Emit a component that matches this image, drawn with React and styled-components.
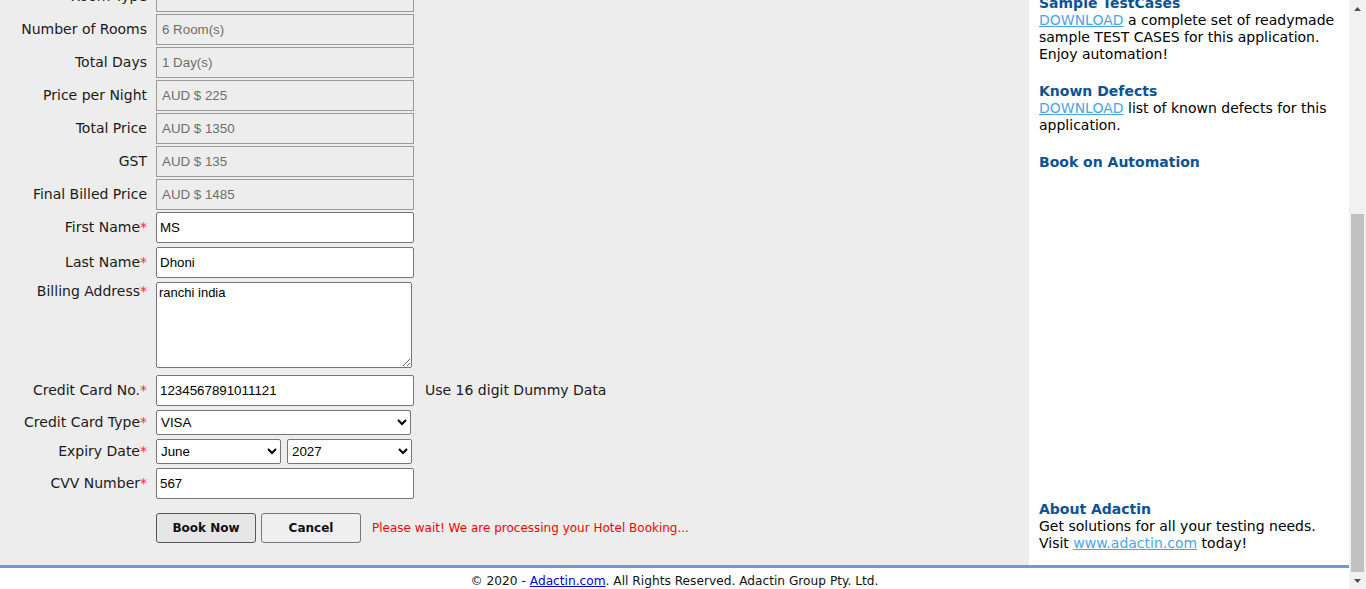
import React, { useLayoutEffect, useEffect, useState } from 'react'
import styled, { createGlobalStyle } from 'styled-components'

const GlobalStyle = createGlobalStyle`
  html, body {
    margin: 0;
    padding: 0;
    background: #ffffff;
    font-family: "DejaVu Sans", Verdana, sans-serif;
    color: #000;
  }
  * { box-sizing: border-box; }
`

const readonlyRows = [
  ['Hotel Name', 'Hotel Creek'],
  ['Location', 'Sydney'],
  ['Room Type', ''],
  ['Number of Rooms', '6 Room(s)'],
  ['Total Days', '1 Day(s)'],
  ['Price per Night', 'AUD $ 225'],
  ['Total Price', 'AUD $ 1350'],
  ['GST', 'AUD $ 135'],
  ['Final Billed Price', 'AUD $ 1485'],
]

const months = ['January', 'February', 'March', 'April', 'May', 'June', 'July', 'August', 'September', 'October', 'November', 'December']

function FakeScrollbar() {
  const [thumb, setThumb] = useState({ top: 17, height: 0 })

  useEffect(() => {
    const update = () => {
      const docH = document.documentElement.scrollHeight
      const vh = window.innerHeight
      const track = vh - 34
      setThumb({
        top: 17 + (window.scrollY / docH) * track,
        height: (vh / docH) * track,
      })
    }
    update()
    const t = setTimeout(update, 0)
    window.addEventListener('scroll', update)
    return () => {
      clearTimeout(t)
      window.removeEventListener('scroll', update)
    }
  }, [])

  return (
    <ScrollTrack>
      <Arrow>
        <svg width="7" height="4" viewBox="0 0 7 4"><path d="M3.5 0 L7 4 L0 4 Z" fill="#505050" /></svg>
      </Arrow>
      <Thumb style={{ top: thumb.top, height: thumb.height }} />
      <Arrow $bottom>
        <svg width="7" height="4" viewBox="0 0 7 4"><path d="M0 0 L7 0 L3.5 4 Z" fill="#505050" /></svg>
      </Arrow>
    </ScrollTrack>
  )
}

function App() {
  useLayoutEffect(() => {
    window.scrollTo(0, document.documentElement.scrollHeight)
  }, [])
  useEffect(() => {
    const t = setTimeout(() => window.scrollTo(0, document.documentElement.scrollHeight), 0)
    return () => clearTimeout(t)
  }, [])

  return (
    <>
      <GlobalStyle />
      <Page>
        <Header>
          <Logo>adactin</Logo>
          <HeaderText>Welcome to Adactin Group of Hotels</HeaderText>
        </Header>
        <Body>
          <Main>
            <Title>Book A Hotel</Title>
            <Form>
              {readonlyRows.map(([label, value]) => (
                <Row key={label} $gap={2}>
                  <Label>{label}</Label>
                  <TextInput disabled defaultValue={value} />
                </Row>
              ))}
              <Row $gap={2}>
                <Label>First Name<Req>*</Req></Label>
                <TextInput defaultValue="MS" />
              </Row>
              <Row $gap={4}>
                <Label>Last Name<Req>*</Req></Label>
                <TextInput defaultValue="Dhoni" />
              </Row>
              <Row $gap={4} $top>
                <Label $top>Billing Address<Req>*</Req></Label>
                <TextArea defaultValue="ranchi india" />
              </Row>
              <Row $gap={7}>
                <Label>Credit Card No.<Req>*</Req></Label>
                <TextInput defaultValue="1234567891011121" />
                <Hint>Use 16 digit Dummy Data</Hint>
              </Row>
              <Row $gap={4}>
                <Label>Credit Card Type<Req>*</Req></Label>
                <Select $w={255} defaultValue="VISA">
                  <option>VISA</option>
                  <option>Master Card</option>
                  <option>American Express</option>
                </Select>
              </Row>
              <Row $gap={4}>
                <Label>Expiry Date<Req>*</Req></Label>
                <Pair>
                  <Select $w={125} defaultValue="June">
                    {months.map(m => <option key={m}>{m}</option>)}
                  </Select>
                  <Select $w={125} defaultValue="2027">
                    <option>2026</option>
                    <option>2027</option>
                    <option>2028</option>
                  </Select>
                </Pair>
              </Row>
              <Row $gap={4}>
                <Label>CVV Number<Req>*</Req></Label>
                <TextInput defaultValue="567" />
              </Row>
              <Row $gap={14}>
                <Label />
                <Buttons>
                  <Button $primary>Book Now</Button>
                  <Button>Cancel</Button>
                  <Wait>Please wait! We are processing your Hotel Booking...</Wait>
                </Buttons>
              </Row>
            </Form>
          </Main>
          <Sidebar>
            <Section>
              <SideHead>Build Your Own Framework</SideHead>
              <p>Automation framework guide.</p>
            </Section>
            <Section>
              <SideHead>Testing Courses</SideHead>
              <p>Selenium and QTP courses.</p>
            </Section>
            <Section>
              <SideHead>Practice Applications</SideHead>
              <p>More demo apps for testing.</p>
            </Section>
            <Section>
              <SideHead>Sample TestCases</SideHead>
              <p><SideLink href="#">DOWNLOAD</SideLink> a complete set of readymade sample TEST CASES for this application. Enjoy automation!</p>
            </Section>
            <Section>
              <SideHead>Known Defects</SideHead>
              <p><SideLink href="#">DOWNLOAD</SideLink> list of known defects for this application.</p>
            </Section>
            <Section>
              <SideHead>Book on Automation</SideHead>
            </Section>
            <About>
              <SideHead>About Adactin</SideHead>
              <p>Get solutions for all your testing needs. Visit <SideLink href="#">www.adactin.com</SideLink> today!</p>
            </About>
          </Sidebar>
        </Body>
        <Footer>
          © 2020 - <a href="#">Adactin.com</a>. All Rights Reserved. Adactin Group Pty. Ltd.
        </Footer>
      </Page>
      <FakeScrollbar />
    </>
  )
}

export default App

const Page = styled.div`
  margin-right: 17px;
`

const ScrollTrack = styled.div`
  position: fixed;
  top: 0;
  right: 0;
  width: 17px;
  height: 100vh;
  background: #f1f1f1;
  display: flex;
  flex-direction: column;
  justify-content: space-between;
`

const Arrow = styled.div`
  width: 17px;
  height: 17px;
  display: flex;
  justify-content: center;
  align-items: center;
  padding-top: ${p => (p.$bottom ? '0' : '1px')};
`

const Thumb = styled.div`
  position: absolute;
  left: 2px;
  width: 13px;
  background: #c1c1c1;
`

const Header = styled.div`
  height: 120px;
  display: flex;
  align-items: center;
  gap: 40px;
  padding: 0 20px;
  background: #ffffff;
`

const Logo = styled.div`
  font-family: "Liberation Sans", Arial, sans-serif;
  font-size: 40px;
  font-weight: bold;
  color: #1f5f9e;
`

const HeaderText = styled.div`
  font-size: 16px;
  color: #333;
`

const Body = styled.div`
  display: flex;
  align-items: stretch;
`

const Main = styled.div`
  flex: 1;
  background: #ededed;
  padding: 30px 0 22px 0;
`

const Title = styled.div`
  height: 90px;
  padding-left: 20px;
  font-size: 20px;
  font-weight: bold;
  color: #003366;
`

const Form = styled.div`
  display: flex;
  flex-direction: column;
`

const Row = styled.div`
  display: flex;
  align-items: ${p => (p.$top ? 'flex-start' : 'center')};
  margin-top: ${p => p.$gap}px;
  &:first-child { margin-top: 0; }
`

const Label = styled.div`
  width: 156px;
  flex-shrink: 0;
  padding-right: 9px;
  text-align: right;
  font-size: 14px;
  color: #1a1a1a;
  padding-top: ${p => (p.$top ? '1px' : '0')};
  padding-bottom: ${p => (p.$top ? '0' : '1px')};
`

const Req = styled.span`
  color: #ff2a2a;
`

const TextInput = styled.input`
  width: 258px;
  height: 31px;
  border: 1px solid #767676;
  border-radius: 2px;
  padding: 1px 3px;
  font-family: "Liberation Sans", Arial, sans-serif;
  font-size: 13.33px;
  color: #000;
  background: #fff;

  &:disabled {
    background: #ededed;
    border-color: #9a9a9a;
    border-radius: 0;
    color: #6d6d6d;
    padding-left: 5px;
  }
`

const TextArea = styled.textarea`
  width: 256px;
  height: 86px;
  border: 1px solid #767676;
  border-radius: 2px;
  padding: 2px;
  font-family: "Liberation Sans", Arial, sans-serif;
  font-size: 13px;
  color: #000;
  background: #fff;
  resize: both;
`

const Select = styled.select`
  width: ${p => p.$w}px;
  height: 25px;
  border: 1px solid #767676;
  border-radius: 2px;
  font-family: "Liberation Sans", Arial, sans-serif;
  font-size: 13.33px;
  color: #000;
  background: #fff;
`

const Pair = styled.div`
  display: flex;
  gap: 6px;
`

const Hint = styled.span`
  margin-left: 11px;
  padding-bottom: 1px;
  font-size: 14px;
  color: #1a1a1a;
`

const Buttons = styled.div`
  display: flex;
  align-items: center;
  gap: 5px;
`

const Button = styled.button`
  width: 100px;
  height: 30px;
  border: 1px solid ${p => (p.$primary ? '#555' : '#767676')};
  border-radius: 3px;
  background: ${p => (p.$primary ? '#e6e6e6' : '#efefef')};
  font-family: "DejaVu Sans", Verdana, sans-serif;
  font-size: 12px;
  font-weight: bold;
  color: #111;
`

const Wait = styled.span`
  margin-left: 6px;
  font-size: 12px;
  color: #ff0000;
`

const Sidebar = styled.div`
  width: 320px;
  flex-shrink: 0;
  background: #fff;
  padding: 38px 10px 13px 10px;
  display: flex;
  flex-direction: column;
  font-size: 14px;
  line-height: 17px;

  p { margin: 0; }
`

const Section = styled.div`
  margin-bottom: 20px;
`

const About = styled.div`
  margin-top: auto;
`

const SideHead = styled.div`
  font-weight: bold;
  color: #0b5394;
  font-size: 14px;
`

const SideLink = styled.a`
  color: #49a6e9;
  text-decoration: underline;
`

const Footer = styled.div`
  border-top: 3px solid #6c9bcd;
  padding: 6px 0 1px 0;
  text-align: center;
  font-size: 12.2px;
  line-height: 14px;
  color: #111;

  a { color: #0000ee; }
`
